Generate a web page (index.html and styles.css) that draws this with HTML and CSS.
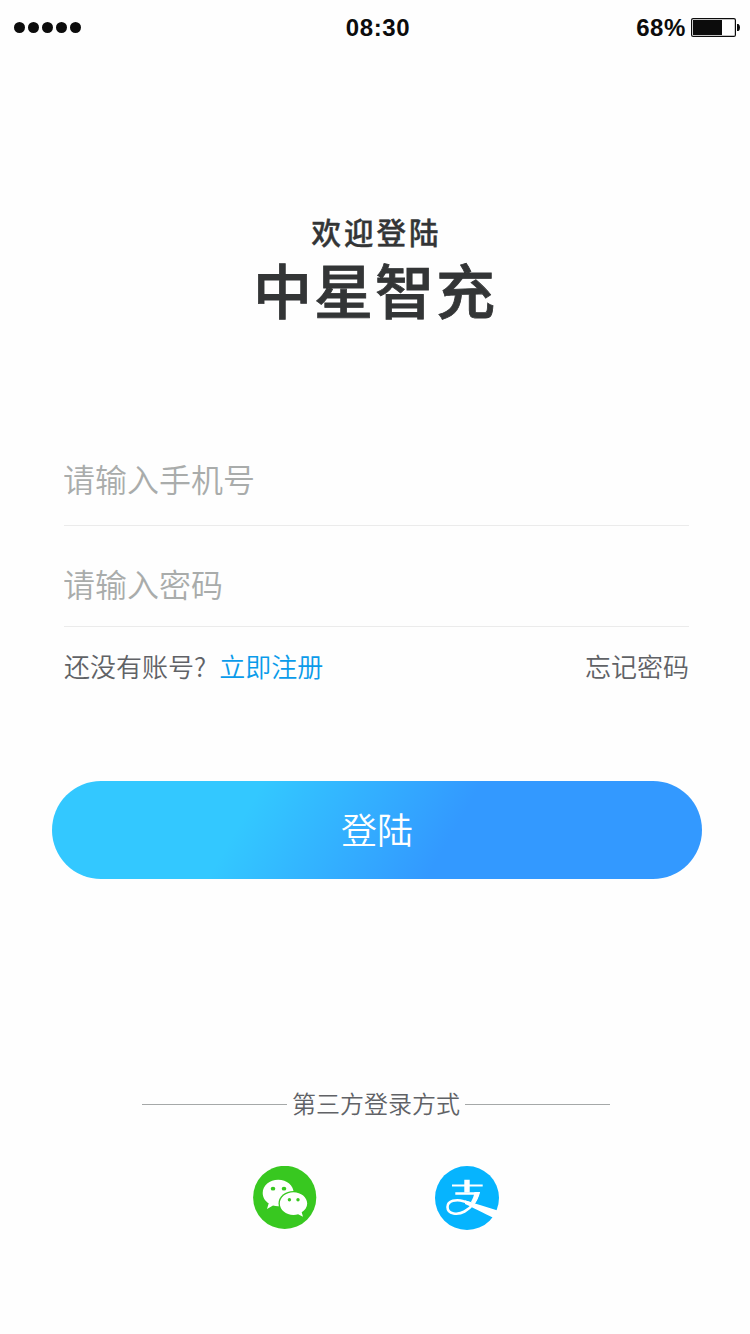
FILE: index.html
```html
<!DOCTYPE html>
<html lang="zh-CN">
<head>
    <meta charset="UTF-8">
    <meta name="viewport" content="width=device-width, initial-scale=1.0">
    <title>登陆</title>
    <link rel="stylesheet" href="styles.css">
</head>
<body>
    <header class="status-bar">
        <div class="signal">
            <span></span><span></span><span></span><span></span><span></span>
        </div>
        <div class="time">08:30</div>
        <div class="power">
            68%
            <svg class="battery" width="50" height="20" viewBox="0 0 50 20">
                <rect x="0.6" y="0.6" width="43.8" height="17.8" rx="1.5" fill="none" stroke="#0c0c0c" stroke-width="1.2"/>
                <rect x="2" y="2" width="29" height="15" fill="#0c0c0c"/>
                <path d="M46 6h1.5q1.5 1.2 1.5 3.5t-1.5 3.500H46z" fill="#0c0c0c"/>
            </svg>
        </div>
    </header>

    <main>
        <div class="title">
            <p>欢迎登陆</p>
            <h1>中星智充</h1>
        </div>

        <form class="login">
            <input class="phone" type="tel" placeholder="请输入手机号">
            <input class="password" type="password" placeholder="请输入密码">
            <div class="links">
                <span>还没有账号?</span>
                <a class="register" href="#">立即注册</a>
                <a class="forget" href="#">忘记密码</a>
            </div>
            <button type="button">登陆</button>
        </form>

        <div class="other">
            <div class="other-title"><span>第三方登录方式</span></div>
            <div class="other-icons">
                <a href="#" aria-label="微信">
                    <svg width="64" height="64" viewBox="0 0 64 64">
                        <circle cx="31.7" cy="31.4" r="31.6" fill="#38c820"/>
                        <path d="M25.200 13.700C16.600 13.700 9.700 19.400 9.700 26.900c0 4.300 2.300 8 6 10.400l-1.700 5.600 6-3.300c1.700.5 3.400.7 5.200.7 8.600 0 15.500-5.900 15.500-13.400S33.800 13.700 25.200 13.700z" fill="#fff"/>
                        <ellipse cx="40.500" cy="37.600" rx="15" ry="12.700" fill="#38c820"/>
                        <path d="M40.500 26.200c-7.600 0-13.700 5-13.700 11.400S32.900 49 40.500 49c1.600 0 3.200-.2 4.600-.7l4.900 2.400-1.300-4.400c3.400-2.100 5.500-5.200 5.500-8.700 0-6.400-6.100-11.400-13.700-11.400z" fill="#fff"/>
                        <g fill="#38c820">
                            <ellipse cx="20" cy="22.700" rx="2.300" ry="1.900"/>
                            <ellipse cx="31" cy="22.700" rx="2.300" ry="1.900"/>
                            <circle cx="36.400" cy="33.700" r="1.700"/>
                            <circle cx="45" cy="33.700" r="1.700"/>
                        </g>
                    </svg>
                </a>
                <a href="#" aria-label="支付宝">
                    <svg width="65" height="64" viewBox="0 0 65 64">
                        <circle cx="32" cy="32" r="32" fill="#06b4fe"/>
                        <path d="M29.300 13.700h5.400v4.700h13v2.200h-13v5.900h-5.400v-5.900H17v-2.200h12.300z" fill="#fff"/>
                        <path d="M20.300 27.500H43C41 35 36 42 29.500 45.500c-6.500 3.600-17 3-17-4.500 0-6.500 9-8 16-5.800C33 36.500 38 39 44 41.500" fill="none" stroke="#fff" stroke-width="2.600"/>
                        <path d="M39.500 26.100h5.600c-1.200 5-3 8.600-5.300 11.800l-4-1.700c1.900-3 3-5.800 3.700-10.100z" fill="#fff"/>
                        <path d="M30 34.400c5 1 9 2.500 15 4.700l20 6.100-3.500 8C53 49.500 42 43.500 30 38z" fill="#fff"/>
                    </svg>
                </a>
            </div>
        </div>
    </main>
</body>
</html>
```

FILE: styles.css
```css
* {
    box-sizing: border-box;
}

body {
    margin: 0;
    height: 1334px;
    background-color: #fefefe;
    font-family: "Noto Sans CJK SC", sans-serif;
    font-weight: 350;
    color: #606266;
}

p, h1 {
    margin: 0;
}

a {
    color: inherit;
    text-decoration: none;
}

svg {
    display: block;
}

/* status bar */
.status-bar {
    display: grid;
    grid-template-columns: 1fr auto 1fr;
    align-items: center;
    height: 55px;
    padding: 0 9px 0 14px;
    font-family: "Liberation Sans", sans-serif;
    font-size: 24px;
    font-weight: bold;
    letter-spacing: 0.6px;
    color: #0c0c0c;
}

.signal {
    display: flex;
    gap: 3px;
}

.signal span {
    width: 11px;
    height: 11px;
    border-radius: 50%;
    background-color: #0c0c0c;
}

.time {
    padding: 1px 0 0 1px;
}

.power {
    display: flex;
    justify-content: flex-end;
    align-items: center;
    gap: 5px;
}

/* title */
.title {
    padding-top: 157px;
    text-align: center;
    font-family: "Liberation Sans", "Noto Sans CJK SC", sans-serif;
    color: #333536;
}

.title p {
    padding-left: 3px;
    font-size: 29.5px;
    line-height: 44px;
    font-weight: 500;
    letter-spacing: 3px;
    -webkit-text-stroke: 0.4px #333536;
}

.title h1 {
    font-size: 59px;
    line-height: 76px;
    font-weight: 500;
    letter-spacing: 2px;
    -webkit-text-stroke: 0.8px #333536;
}

/* form */
.login {
    padding: 104px 61px 0 64px;
}

.login input {
    display: block;
    width: 100%;
    padding: 0;
    border: none;
    border-bottom: 1px solid #ebebeb;
    background: none;
    font-family: inherit;
    font-size: 32px;
    font-weight: inherit;
    text-indent: -1px;
    outline: none;
}

.login input::placeholder {
    color: #a9acab;
    opacity: 1;
}

.login .phone {
    height: 90px;
    padding-bottom: 5px;
}

.login .password {
    height: 101px;
    padding-top: 13px;
}

.links {
    display: flex;
    margin-top: 19px;
    font-size: 26px;
    line-height: 40px;
}

.register {
    margin-left: 13px;
    color: #0a9bea;
}

.forget {
    margin-left: auto;
}

.login button {
    display: block;
    width: 650px;
    height: 98px;
    margin: 95px 0 0 -12px;
    padding: 0 0 4px;
    border: none;
    border-radius: 49px;
    background: linear-gradient(120deg, #33c8ff 30%, #3399ff 61%);
    color: #fff;
    font-family: inherit;
    font-size: 36px;
    font-weight: inherit;
}

/* third party login */
.other {
    padding: 205px 0 0 2px;
}

.other-title {
    display: flex;
    justify-content: center;
    align-items: center;
    gap: 5px;
    height: 40px;
    font-size: 24px;
    line-height: 38px;
}

.other-title span {
    padding-bottom: 2px;
}

.other-title::before,
.other-title::after {
    content: "";
    width: 145px;
    height: 1px;
    background-color: #a5a8a8;
}

.other-icons {
    display: flex;
    justify-content: center;
    gap: 118px;
    margin-top: 42px;
}
```
